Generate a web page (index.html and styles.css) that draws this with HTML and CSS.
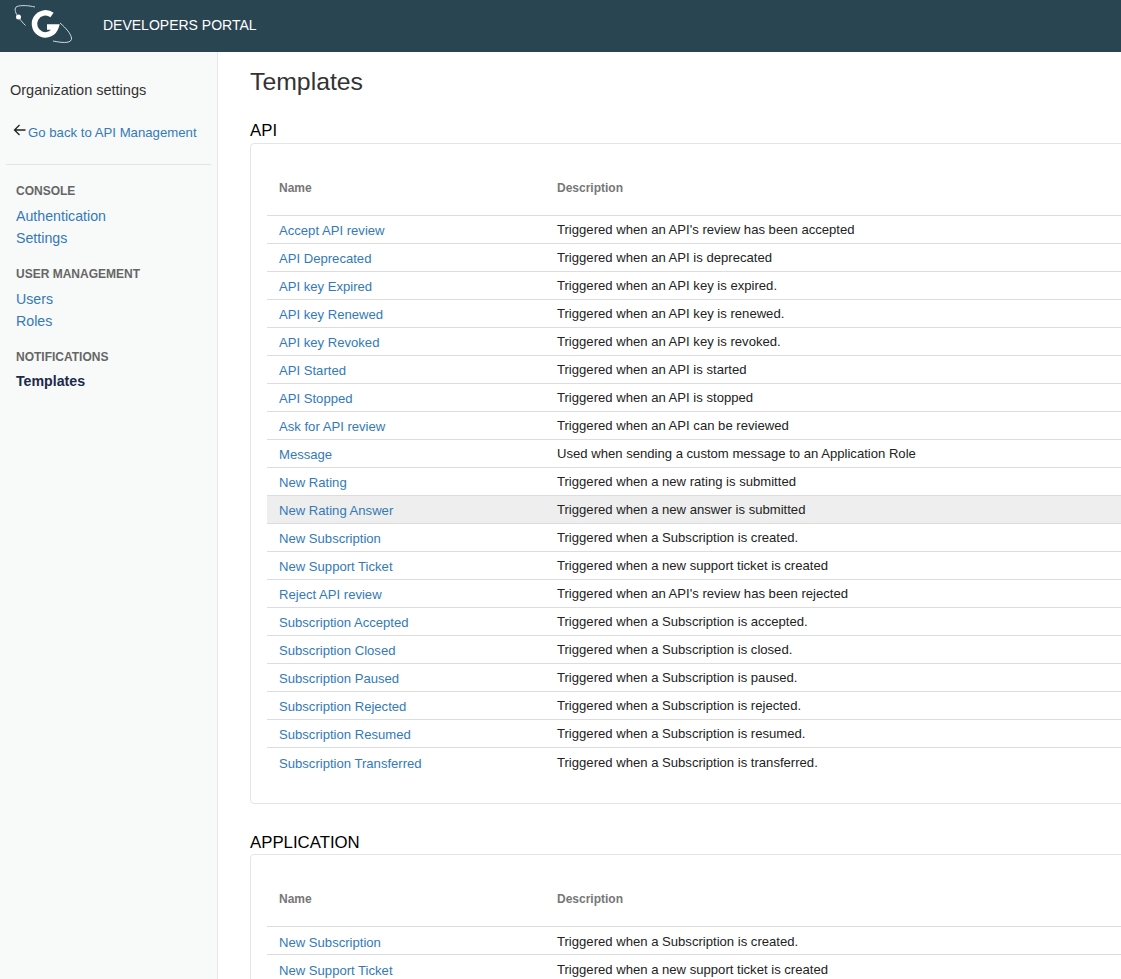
FILE: index.html
```html
<!DOCTYPE html>
<html lang="en">
<head>
    <meta charset="UTF-8">
    <meta name="viewport" content="width=device-width, initial-scale=1.0">
    <title>Templates</title>
    <link rel="stylesheet" href="styles.css">
</head>
<body>
    <header class="topbar">
        <svg class="logo" width="76" height="46" viewBox="0 0 76 46">
            <path d="M35 7C29 5.500 21 5 17 6.500 14 7.800 15 12 17.500 16 19.500 19 22.500 22.500 25.500 25.500" fill="none" stroke="#cfd8dc" stroke-width="1"/>
            <circle cx="18.500" cy="17" r="2.500" fill="#fff"/>
            <path d="M52 15A11 11 0 1 0 56 27L47 27" fill="none" stroke="#fff" stroke-width="5.500"/>
            <path d="M60 23C66 28 71 34 71.500 38 72 43 65 43.500 53 41" fill="none" stroke="#cfd8dc" stroke-width="1"/>
        </svg>
        <span class="portal-name">DEVELOPERS PORTAL</span>
    </header>

    <div class="layout">
        <nav class="sidebar">
            <div class="org-title">Organization settings</div>
            <div class="back-row">
                <svg class="back-arrow" width="13" height="12" viewBox="0 0 13 12"><path d="M12.500 6H1.500M6.500 1L1.500 6l5 5" fill="none" stroke="#222" stroke-width="1.300"/></svg>
                <a href="#">Go back to API Management</a>
            </div>
            <hr class="side-rule">
            <h4>CONSOLE</h4>
            <a class="side-link" href="#">Authentication</a>
            <a class="side-link" href="#">Settings</a>
            <h4>USER MANAGEMENT</h4>
            <a class="side-link" href="#">Users</a>
            <a class="side-link" href="#">Roles</a>
            <h4>NOTIFICATIONS</h4>
            <a class="side-link active" href="#">Templates</a>
        </nav>

        <main class="content">
            <h1>Templates</h1>

            <h2>API</h2>
            <div class="card">
                <table>
                    <thead>
                        <tr><th>Name</th><th>Description</th></tr>
                    </thead>
                    <tbody>
                        <tr><td><a href="#">Accept API review</a></td><td>Triggered when an API's review has been accepted</td></tr>
                        <tr><td><a href="#">API Deprecated</a></td><td>Triggered when an API is deprecated</td></tr>
                        <tr><td><a href="#">API key Expired</a></td><td>Triggered when an API key is expired.</td></tr>
                        <tr><td><a href="#">API key Renewed</a></td><td>Triggered when an API key is renewed.</td></tr>
                        <tr><td><a href="#">API key Revoked</a></td><td>Triggered when an API key is revoked.</td></tr>
                        <tr><td><a href="#">API Started</a></td><td>Triggered when an API is started</td></tr>
                        <tr><td><a href="#">API Stopped</a></td><td>Triggered when an API is stopped</td></tr>
                        <tr><td><a href="#">Ask for API review</a></td><td>Triggered when an API can be reviewed</td></tr>
                        <tr><td><a href="#">Message</a></td><td>Used when sending a custom message to an Application Role</td></tr>
                        <tr><td><a href="#">New Rating</a></td><td>Triggered when a new rating is submitted</td></tr>
                        <tr class="hovered"><td><a href="#">New Rating Answer</a></td><td>Triggered when a new answer is submitted</td></tr>
                        <tr><td><a href="#">New Subscription</a></td><td>Triggered when a Subscription is created.</td></tr>
                        <tr><td><a href="#">New Support Ticket</a></td><td>Triggered when a new support ticket is created</td></tr>
                        <tr><td><a href="#">Reject API review</a></td><td>Triggered when an API's review has been rejected</td></tr>
                        <tr><td><a href="#">Subscription Accepted</a></td><td>Triggered when a Subscription is accepted.</td></tr>
                        <tr><td><a href="#">Subscription Closed</a></td><td>Triggered when a Subscription is closed.</td></tr>
                        <tr><td><a href="#">Subscription Paused</a></td><td>Triggered when a Subscription is paused.</td></tr>
                        <tr><td><a href="#">Subscription Rejected</a></td><td>Triggered when a Subscription is rejected.</td></tr>
                        <tr><td><a href="#">Subscription Resumed</a></td><td>Triggered when a Subscription is resumed.</td></tr>
                        <tr class="last"><td><a href="#">Subscription Transferred</a></td><td>Triggered when a Subscription is transferred.</td></tr>
                    </tbody>
                </table>
            </div>

            <h2 class="next-section">APPLICATION</h2>
            <div class="card">
                <table class="app-table">
                    <thead>
                        <tr><th>Name</th><th>Description</th></tr>
                    </thead>
                    <tbody>
                        <tr><td><a href="#">New Subscription</a></td><td>Triggered when a Subscription is created.</td></tr>
                        <tr><td><a href="#">New Support Ticket</a></td><td>Triggered when a new support ticket is created</td></tr>
                    </tbody>
                </table>
            </div>
        </main>
    </div>
</body>
</html>
```

FILE: styles.css
```css
html, body {
    height: 100%;
}
body {
    font-family: "Liberation Sans", Arial, sans-serif;
    margin: 0;
    padding: 0;
    background-color: #fff;
    color: #222;
    overflow: hidden;
}
a {
    color: #337ab7;
    text-decoration: none;
}
.topbar {
    height: 52px;
    background-color: #2a4552;
    color: #fff;
    display: flex;
    align-items: center;
}
.logo {
    flex: none;
    margin-right: 27px;
    margin-top: -6px;
}
.portal-name {
    font-size: 14px;
    line-height: 50px;
    margin-top: -2px;
}
.layout {
    display: flex;
    height: 927px;
}
.sidebar {
    flex: none;
    width: 218px;
    box-sizing: border-box;
    background-color: #f8f9f9;
    border-right: 1px solid #e4e7e8;
    padding: 30px 0 0 6px;
}
.org-title {
    font-size: 14.500px;
    line-height: 16px;
    color: #333;
    padding-left: 4px;
}
.back-row {
    display: flex;
    align-items: flex-start;
    margin-top: 26px;
    padding-left: 7px;
    height: 16px;
    font-size: 13.200px;
    line-height: 16px;
}
.back-arrow {
    flex: none;
    margin-right: 2px;
}
.back-row a {
    margin-top: 1px;
}
.side-rule {
    border: none;
    border-top: 1px solid #e2e5e8;
    margin: 24px 6px 0 0;
    width: 205px;
}
.sidebar h4 {
    font-size: 12px;
    line-height: 16px;
    font-weight: bold;
    color: #666;
    margin: 18px 0 0 10px;
}
.sidebar h4 + .side-link {
    margin-top: 9px;
}
.side-link {
    display: block;
    font-size: 14.200px;
    line-height: 16px;
    margin: 6px 0 0 10px;
}
.side-link + h4 {
    margin-top: 20px;
}
.sidebar h4 + .side-link.active {
    font-weight: bold;
    color: #1b2a4a;
    margin-top: 8px;
}
.content {
    flex: 1;
    min-width: 0;
    padding: 0 0 0 32px;
    overflow: hidden;
}
h1 {
    font-size: 24.800px;
    line-height: 30px;
    font-weight: normal;
    color: #333;
    margin: 15px 0 0 0;
}
h2 {
    font-size: 16.800px;
    line-height: 20px;
    font-weight: normal;
    color: #000;
    margin: 24px 0 2px 0;
}
h2.next-section {
    margin: 29px 0 1px 0;
}
.card {
    width: 900px;
    box-sizing: border-box;
    background: #fff;
    border: 1px solid #e4e6e6;
    border-radius: 4px;
    padding: 16px 16px 26px 16px;
}
table {
    width: 100%;
    border-collapse: collapse;
    table-layout: fixed;
    font-size: 13.100px;
}
th {
    text-align: left;
    font-size: 12px;
    font-weight: bold;
    color: #777;
    height: 55px;
    padding: 0 12px;
    border-bottom: 1px solid #ddd;
}
th:first-child {
    width: 254px;
}
td {
    height: 27px;
    padding: 0 12px;
    border-bottom: 1px solid #ddd;
    color: #222;
}
td a {
    position: relative;
    top: 1px;
}
.app-table td {
    height: 25px;
    padding-top: 2px;
}
tr.last td {
    height: 29px;
    border-bottom: none;
}
tr.hovered td {
    background-color: #eee;
}
```
